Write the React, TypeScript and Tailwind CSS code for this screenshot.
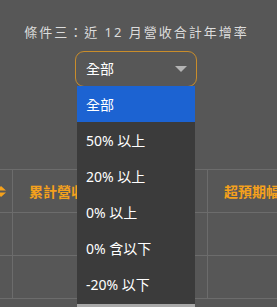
import React from "react";

const items = ["全部", "50% 以上", "20% 以上", "0% 以上", "0% 含以下", "-20% 以下"];

function SortIcon() {
  return (
    <svg width="12" height="11" viewBox="0 0 12 11" className="ml-[-5px] shrink-0">
      <path d="M1 4.5 L6 0 L11 4.5 Z" fill="#f5a11c" />
      <path d="M1 6.5 L6 11 L11 6.5 Z" fill="#f5a11c" />
    </svg>
  );
}

export default function App() {
  const font = { fontFamily: '"Noto Sans", "Noto Sans CJK TC", sans-serif' };
  return (
    <div
      className="relative w-[277px] h-[307px] overflow-hidden bg-[#575757] flex flex-col"
      style={font}
    >
      <div className="pt-[24px] pr-[4px] text-center text-[13px] leading-[16px] tracking-[2px] text-[#dcdcdc]">
        條件三：近 12 月營收合計年增率
      </div>
      <div className="relative ml-[75px] mt-[11px] w-[122px] h-[36px] rounded-[9px] border border-[#c98d2b] flex items-center justify-between pl-[10px] pr-[9px] z-10">
        <span className="text-[14px] text-white leading-none">全部</span>
        <svg width="12" height="6" viewBox="0 0 12 6">
          <path d="M0 0 L12 0 L6 6 Z" fill="#b4b4b4" />
        </svg>
        <div className="absolute left-[1px] top-full w-[118px] bg-[#3b3b3b] flex flex-col">
          {items.map((t, i) => (
            <div
              key={t}
              className={
                i === 0
                  ? "h-[36px] flex items-center pl-[9px] text-[14px] text-white bg-[#1c63d2]"
                  : "h-[36px] flex items-center pl-[9px] text-[14px] text-white"
              }
            >
              {t}
            </div>
          ))}
          <div className="h-[2px]" />
          <div className="h-[3px] bg-[#a8a8a8]" />
        </div>
      </div>
      <div className="mt-[82px] border-t border-[#6c6c6c] flex flex-col">
        <div className="grid grid-cols-[13px_195px_1fr] h-[43px] border-b border-[#6c6c6c]">
          <div className="border-r border-[#6c6c6c] flex items-center overflow-hidden">
            <SortIcon />
          </div>
          <div className="border-r border-[#6c6c6c] flex items-center pl-[16px] overflow-hidden whitespace-nowrap text-[14px] font-bold text-[#f5a11c]">
            累計營收
          </div>
          <div className="flex items-center pl-[16px] overflow-hidden whitespace-nowrap text-[14px] font-bold text-[#f5a11c]">
            超預期幅度
          </div>
        </div>
        {[0, 1].map((r) => (
          <div key={r} className="grid grid-cols-[13px_195px_1fr] h-[43px] border-b border-[#6c6c6c]">
            <div className="border-r border-[#6c6c6c]" />
            <div className="border-r border-[#6c6c6c]" />
            <div />
          </div>
        ))}
      </div>
    </div>
  );
}
